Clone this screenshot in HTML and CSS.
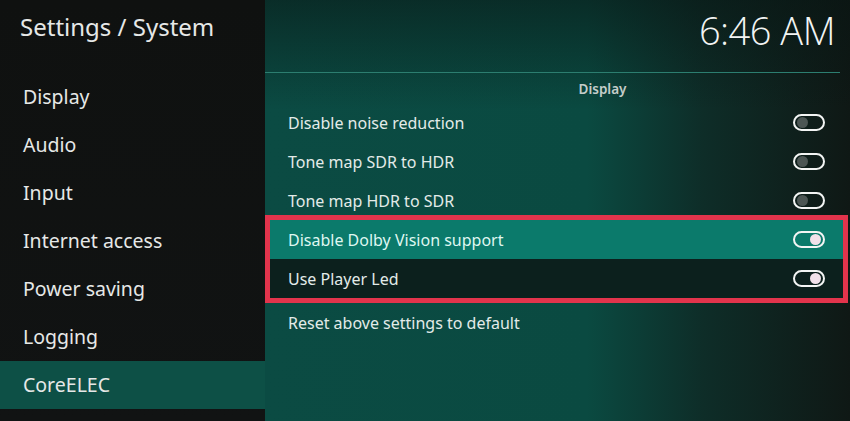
FILE: index.html
```html
<!DOCTYPE html>
<html>
<head>
  <meta charset="utf-8">
  <title>Settings / System</title>
  <link rel="stylesheet" href="styles.css">
</head>
<body>
<div class="screen">
  <!-- 왼쪽 메뉴 -->
  <div class="sidebar">
    <div class="title">Settings / System</div>
    <div class="nav">
      <div class="nav-item">Display</div>
      <div class="nav-item">Audio</div>
      <div class="nav-item">Input</div>
      <div class="nav-item">Internet access</div>
      <div class="nav-item">Power saving</div>
      <div class="nav-item">Logging</div>
      <div class="nav-item active">CoreELEC</div>
    </div>
  </div>

  <!-- 설정 목록 -->
  <div class="main">
    <div class="top-bar">
      <div class="clock">6:46 AM</div>
    </div>
    <div class="group-label">Display</div>
    <div class="row"><span>Disable noise reduction</span><span class="toggle"></span></div>
    <div class="row"><span>Tone map SDR to HDR</span><span class="toggle"></span></div>
    <div class="row"><span>Tone map HDR to SDR</span><span class="toggle"></span></div>
    <div class="mark-box">
      <div class="row focused"><span>Disable Dolby Vision support</span><span class="toggle on"></span></div>
      <div class="row dark"><span>Use Player Led</span><span class="toggle on"></span></div>
    </div>
    <div class="row"><span>Reset above settings to default</span></div>
  </div>
</div>
</body>
</html>
```

FILE: styles.css
```css
/* 기본 */
body { margin: 0; padding: 0; background: #0f1111; font-family: "Noto Sans", "Open Sans", sans-serif; overflow: hidden; }
.screen { display: flex; width: 850px; height: 421px; }

/* 왼쪽 메뉴 */
.sidebar { width: 265px; flex-shrink: 0; background: linear-gradient(to bottom, #0f1110, #111313); color: #e6e8e7; }
.sidebar .title { height: 73px; box-sizing: border-box; padding: 10px 0 0 20px; font-size: 24px; }
.nav-item { height: 48px; line-height: 48px; padding-left: 23px; font-size: 19.5px; }
.nav-item.active { background: #0d5046; }

/* 오른쪽 */
.main { flex: 1; display: flex; flex-direction: column;
  background:
    linear-gradient(to bottom, rgba(8, 20, 18, 0.55) 0px, rgba(8, 20, 18, 0) 110px),
    linear-gradient(to right, #0b4b43 0%, #0a4a41 55%, #0e2d28 75%, #0f1815 100%); }
.top-bar { height: 73px; border-bottom: 1px solid #2c7e70; display: flex; justify-content: flex-end; box-sizing: border-box; margin-right: 10px; }
.clock { font-family: "Open Sans", "Noto Sans", sans-serif; font-weight: 300; font-size: 38px; color: #f2f4f3; padding: 4px 5px 0 0; letter-spacing: -0.5px; }
.group-label { height: 30px; line-height: 32px; text-align: center; padding-left: 90px; font-size: 13.5px; font-weight: 600; color: #c4cdca; }

.row { height: 39px; display: flex; align-items: center; justify-content: space-between; padding: 0 25px 0 23px; font-size: 16px; color: #e3ebe9; }

/* 빨간 표시 박스 */
.mark-box { border: 5px solid #e2344c; margin: -5px 2px 0 0; }
.mark-box .row { padding: 0 18px 0 18px; }
.row.focused { background: #0b7a6b; color: #dff7f1; }
.row.dark { background: #0c201d; }

/* 토글 */
.toggle { width: 28px; height: 13px; border: 2px solid #f3f5f4; border-radius: 10px; position: relative; }
.toggle::after { content: ""; position: absolute; left: 2px; top: 1px; width: 11px; height: 11px; border-radius: 50%; background: #4c5654; }
.toggle.on::after { left: auto; right: 2px; background: #f1e1ea; }
```
